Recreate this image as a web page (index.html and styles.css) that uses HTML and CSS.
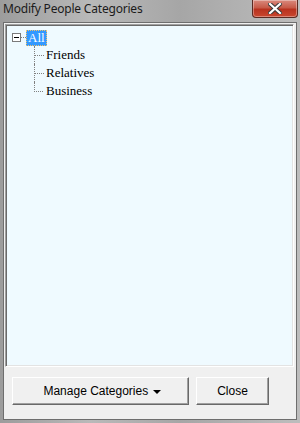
FILE: index.html
```html
<!DOCTYPE html>
<html>
<head>
	<title>Modify People Categories</title>
	<meta charset="utf-8">
	<link rel="stylesheet" href="styles.css">
</head>
<body>
	<div class="window">
		<div class="titlebar">
			<span class="title">Modify People Categories</span>
			<div class="close-x">
				<svg width="14" height="11" viewBox="0 0 14 11">
					<path d="M2 1 L12 10 M12 1 L2 10" stroke="#3a3a3a" stroke-width="4.2" stroke-linecap="square"/>
					<path d="M2 1 L12 10 M12 1 L2 10" stroke="#fff" stroke-width="2.2" stroke-linecap="square"/>
				</svg>
			</div>
		</div>
		<div class="client">
			<div class="tree">
				<div class="root">
					<span class="toggle"><span class="minus"></span></span>
					<span class="root-dots"></span>
					<span class="label selected">All</span>
				</div>
				<ul class="children">
					<li><span class="branch"></span><span class="label">Friends</span></li>
					<li><span class="branch"></span><span class="label">Relatives</span></li>
					<li class="last"><span class="branch"></span><span class="label">Business</span></li>
				</ul>
			</div>
			<div class="footer">
				<button class="btn btn-manage">Manage Categories <span class="caret"></span></button>
				<button class="btn btn-close">Close</button>
			</div>
		</div>
	</div>
</body>
</html>
```
FILE: styles.css
```css
* {
	box-sizing: border-box;
}
body {
	margin: 0;
	padding: 0;
	width: 300px;
	height: 423px;
	overflow: hidden;
	font-family: "Liberation Sans", Arial, sans-serif;
}
.window {
	width: 300px;
	height: 423px;
	display: flex;
	flex-direction: column;
	padding: 0 3px 3px 3px;
	background: linear-gradient(90deg, #9c9c9c 0%, #b9b9b9 30%, #a6a6a6 60%, #bdbdbd 100%);
}
.titlebar {
	height: 22px;
	display: flex;
	align-items: flex-start;
	padding-left: 0;
}
.title {
	font-family: "Noto Sans", "Open Sans", sans-serif;
	font-size: 12px;
	letter-spacing: -0.2px;
	color: #1b1b1b;
	line-height: 17px;
}
.close-x {
	margin-left: auto;
	margin-right: -1px;
	width: 46px;
	height: 18px;
	border: 1px solid #5a2a22;
	border-top: none;
	border-radius: 0 0 4px 4px;
	background: linear-gradient(#d98a7e 0%, #c75a48 45%, #b8321f 55%, #c9472f 100%);
	display: flex;
	align-items: center;
	justify-content: center;
	box-shadow: inset 0 0 0 1px rgba(255,255,255,0.35);
}
.client {
	flex: 1;
	display: flex;
	flex-direction: column;
	background-color: #f0f0f0;
	border: 1px solid #6e6e6e;
	padding: 1px 2px 0 1px;
}
.tree {
	height: 343px;
	background-color: #effaff;
	border-top: 1px solid #a0a0a0;
	border-left: 1px solid #a0a0a0;
	border-right: 1px solid #fff;
	border-bottom: 1px solid #fff;
	box-shadow: inset 1px 1px 0 #696969, inset -1px -1px 0 #e3e3e3;
	padding: 4px 0 0 5px;
	font-family: "Liberation Serif", "Times New Roman", serif;
	font-size: 13px;
	color: #000;
}
.root {
	display: flex;
	align-items: center;
	height: 17px;
}
.toggle {
	width: 9px;
	height: 9px;
	border: 1px solid #7a7a7a;
	background: #fff;
	display: flex;
	align-items: center;
	justify-content: center;
	margin-left: 1px;
}
.minus {
	width: 5px;
	height: 1px;
	background: #000;
}
.root-dots {
	width: 5px;
	border-top: 1px dotted #808080;
}
.label {
	padding: 0 2px;
	line-height: 16px;
	height: 16px;
	display: inline-block;
}
.selected {
	background: #3399ff;
	color: #fff;
	outline: 1px dotted #f3c26a;
	outline-offset: -1px;
}
.children {
	list-style: none;
	margin: 0;
	padding: 0 0 0 23px;
}
.children li {
	display: flex;
	align-items: center;
	height: 18px;
}
.branch {
	width: 10px;
	height: 18px;
	border-left: 1px dotted #808080;
	position: relative;
}
.branch::after {
	content: "";
	position: absolute;
	left: 0;
	top: 9px;
	width: 9px;
	border-top: 1px dotted #808080;
}
.children li.last .branch {
	border-left: none;
}
.children li.last .branch::before {
	content: "";
	position: absolute;
	left: 0;
	top: 0;
	height: 10px;
	border-left: 1px dotted #808080;
}
.footer {
	flex: 1;
	display: flex;
	align-items: flex-start;
	padding: 10px 0 0 7px;
	gap: 7px;
}
.btn {
	height: 28px;
	background-color: #f0f0f0;
	border-top: 1px solid #fff;
	border-left: 1px solid #fff;
	border-right: 1px solid #696969;
	border-bottom: 1px solid #696969;
	box-shadow: inset -1px -1px 0 #a0a0a0;
	font-family: "Liberation Sans", Arial, sans-serif;
	font-size: 12px;
	color: #000;
	padding: 0;
}
.btn-manage {
	width: 177px;
	padding-left: 3px;
}
.btn-close {
	width: 73px;
}
.caret {
	display: inline-block;
	width: 0;
	height: 0;
	border-left: 4px solid transparent;
	border-right: 4px solid transparent;
	border-top: 4px solid #000;
	vertical-align: middle;
	margin-left: 1px;
}
```
